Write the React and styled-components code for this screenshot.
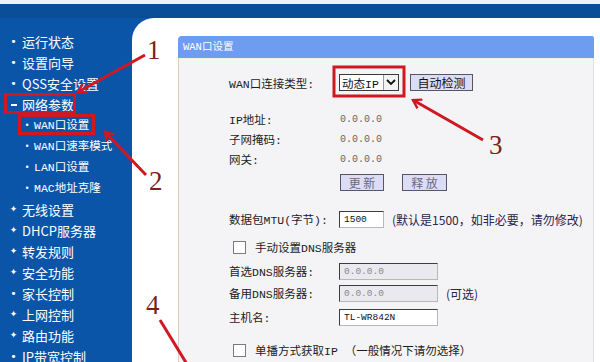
import React from 'react'
import styled, { createGlobalStyle } from 'styled-components'

const CJK = `'Noto Sans CJK SC', 'Noto Sans', sans-serif`
const SONG = `'Liberation Mono', 'Noto Sans CJK SC', monospace`
const RED = '#cf1820'

const GlobalStyle = createGlobalStyle`
  html, body {
    margin: 0;
    padding: 0;
    background: #ffffff;
  }
  body {
    width: 600px;
    height: 362px;
    overflow: hidden;
    font-family: ${CJK};
  }
`

const menu = [
  { text: '运行状态', mark: 'dot' },
  { text: '设置向导', mark: 'dot' },
  { text: 'QSS安全设置', mark: 'dot' },
  { text: '网络参数', mark: 'minus' },
  { text: 'WAN口设置', mark: 'dot', sub: true },
  { text: 'WAN口速率模式', mark: 'dot', sub: true },
  { text: 'LAN口设置', mark: 'dot', sub: true },
  { text: 'MAC地址克隆', mark: 'dot', sub: true },
  { text: '无线设置', mark: 'plus' },
  { text: 'DHCP服务器', mark: 'plus' },
  { text: '转发规则', mark: 'plus' },
  { text: '安全功能', mark: 'plus' },
  { text: '家长控制', mark: 'dot' },
  { text: '上网控制', mark: 'plus' },
  { text: '路由功能', mark: 'plus' },
  { text: 'IP带宽控制', mark: 'dot' },
]

const Marker = ({ kind, sub }) => {
  if (kind === 'minus') return <Mark><Dash /></Mark>
  if (kind === 'plus') return <Mark $star>✦</Mark>
  return <Mark $sub={sub}>•</Mark>
}

export default function App() {
  return (
    <>
      <GlobalStyle />
      <Screen>
        <TopStrip />
        <TopBar />
        <Main>
          <Sidebar>
            {menu.map((m) => (
              <MenuItem key={m.text} $sub={m.sub}>
                <Marker kind={m.mark} sub={m.sub} />
                <span>{m.text}</span>
              </MenuItem>
            ))}
          </Sidebar>
          <Content>
            <Panel>
              <PanelHead>WAN口设置</PanelHead>
              <PanelBody>
                <Row $h={27} $mt={0}>
                  <Label>WAN口连接类型:</Label>
                  <Select>
                    <span>动态IP</span>
                    <SelectArrow>
                      <svg width="10" height="7" viewBox="0 0 10 7">
                        <polyline points="1,1 5,5 9,1" fill="none" stroke="#111" strokeWidth="1.8" />
                      </svg>
                    </SelectArrow>
                  </Select>
                  <Button $w={63} $ml={11}>自动检测</Button>
                </Row>
                <Row $h={20} $mt={13}>
                  <Label>IP地址:</Label>
                  <Value>0.0.0.0</Value>
                </Row>
                <Row $h={20} $mt={0}>
                  <Label>子网掩码:</Label>
                  <Value>0.0.0.0</Value>
                </Row>
                <Row $h={20} $mt={0}>
                  <Label>网关:</Label>
                  <Value>0.0.0.0</Value>
                </Row>
                <Row $h={18} $mt={4}>
                  <Label />
                  <Button $w={44} $muted>更 新</Button>
                  <Button $w={45} $ml={18} $muted>释 放</Button>
                </Row>
                <Row $h={20} $mt={18}>
                  <Label>数据包MTU(字节):</Label>
                  <Input $w={45}>1500</Input>
                  <Hint $ml={8}>(默认是1500，如非必要，请勿修改)</Hint>
                </Row>
                <Row $h={20} $mt={8}>
                  <Check />
                  <CheckText>手动设置DNS服务器</CheckText>
                </Row>
                <Row $h={20} $mt={4}>
                  <Label>首选DNS服务器:</Label>
                  <Input $w={99} $disabled>0.0.0.0</Input>
                </Row>
                <Row $h={20} $mt={2}>
                  <Label>备用DNS服务器:</Label>
                  <Input $w={99} $disabled>0.0.0.0</Input>
                  <Hint $ml={8}>(可选)</Hint>
                </Row>
                <Row $h={20} $mt={4}>
                  <Label>主机名:</Label>
                  <Input $w={99}>TL-WR842N</Input>
                </Row>
                <Row $h={20} $mt={13}>
                  <Check />
                  <CheckText>单播方式获取IP （一般情况下请勿选择）</CheckText>
                </Row>
              </PanelBody>
            </Panel>
          </Content>
        </Main>

        <Overlay>
          <svg width="600" height="362" viewBox="0 0 600 362">
            <defs>
              <marker id="head" markerWidth="12" markerHeight="12" refX="9" refY="6" orient="auto" markerUnits="userSpaceOnUse">
                <path d="M1,1 L9,6 L1,11" fill="none" stroke={RED} strokeWidth="2.4" />
              </marker>
            </defs>
            <rect x="5.5" y="94.5" width="69" height="18" fill="none" stroke={RED} strokeWidth="3" />
            <rect x="19.5" y="115.5" width="74" height="18" fill="none" stroke={RED} strokeWidth="3" />
            <rect x="334" y="67" width="70" height="29" fill="none" stroke={RED} strokeWidth="3" />
            <line x1="145" y1="55" x2="78" y2="92" stroke={RED} strokeWidth="3" markerEnd="url(#head)" />
            <line x1="146" y1="175" x2="105" y2="132" stroke={RED} strokeWidth="3" markerEnd="url(#head)" />
            <line x1="483" y1="140" x2="413" y2="100" stroke={RED} strokeWidth="3" markerEnd="url(#head)" />
            <line x1="160" y1="320" x2="193" y2="374" stroke={RED} strokeWidth="3" />
          </svg>
          <Num $x={147} $y={37}>1</Num>
          <Num $x={149} $y={168}>2</Num>
          <Num $x={489} $y={132}>3</Num>
          <Num $x={146} $y={292}>4</Num>
        </Overlay>
      </Screen>
    </>
  )
}

const Screen = styled.div`
  position: relative;
  width: 600px;
  height: 362px;
  display: flex;
  flex-direction: column;
  overflow: hidden;
  background: #ffffff;
`

const TopStrip = styled.div`
  height: 4px;
  background: #edf2f7;
`

const TopBar = styled.div`
  height: 14px;
  background: #0a4d98;
`

const Main = styled.div`
  flex: 1;
  display: flex;
  min-height: 0;
  background: #0b55a9;
`

const Sidebar = styled.nav`
  width: 132px;
  flex: none;
  padding-top: 13px;
  display: flex;
  flex-direction: column;
`

const MenuItem = styled.div`
  height: 21px;
  flex: none;
  display: flex;
  align-items: center;
  padding-left: ${(p) => (p.$sub ? '20px' : '5px')};
  color: #ffffff;
  white-space: nowrap;
  font-family: ${(p) => (p.$sub ? SONG : CJK)};
  font-size: ${(p) => (p.$sub ? '11.5px' : '13px')};
  line-height: 21px;
`

const Mark = styled.span`
  width: ${(p) => (p.$sub ? '14px' : '17px')};
  flex: none;
  display: flex;
  justify-content: center;
  align-items: center;
  font-family: 'DejaVu Sans', sans-serif;
  font-size: ${(p) => (p.$star ? '9px' : p.$sub ? '8px' : '11px')};
  color: #ffffff;
`

const Dash = styled.span`
  width: 6px;
  height: 2px;
  background: #ffffff;
`

const Content = styled.main`
  flex: 1;
  min-width: 0;
  display: flex;
  background: #ffffff;
  border-top-left-radius: 22px;
  padding: 18px 6px 0 46px;
`

const Panel = styled.section`
  flex: 1;
  display: flex;
  flex-direction: column;
`

const PanelHead = styled.header`
  height: 22px;
  flex: none;
  padding-left: 5px;
  background: #6d9cf1;
  border-top-left-radius: 4px;
  border-top-right-radius: 2px;
  color: #ffffff;
  font-family: ${SONG};
  font-size: 10.5px;
  line-height: 22px;
`

const PanelBody = styled.div`
  flex: 1;
  padding: 10px 0 0 50px;
  background: #f4f4f7;
  border-left: 1px solid #e3cdb8;
  border-right: 1px solid #dde2ea;
  border-top: 1px solid #f3f0dc;
`

const Row = styled.div`
  height: ${(p) => p.$h}px;
  margin-top: ${(p) => p.$mt}px;
  display: flex;
  align-items: center;
  white-space: nowrap;
`

const Label = styled.span`
  width: 111px;
  flex: none;
  font-family: ${SONG};
  font-size: 11.5px;
  color: #1c1c1c;
`

const Value = styled.span`
  font-family: 'Liberation Mono', monospace;
  font-size: 10px;
  color: #666666;
`

const Select = styled.div`
  width: 60px;
  height: 17px;
  margin-left: -1px;
  box-sizing: border-box;
  display: flex;
  align-items: center;
  justify-content: space-between;
  padding-left: 2px;
  border: 1px solid #3a3a3a;
  background: #ffffff;
  font-family: ${SONG};
  font-size: 11.5px;
  color: #111111;
`

const SelectArrow = styled.span`
  width: 14px;
  height: 15px;
  display: flex;
  align-items: center;
  justify-content: center;
  border-left: 1px solid #9a9a9a;
  background: #f2f2f2;
`

const Button = styled.div`
  width: ${(p) => p.$w}px;
  height: 17px;
  margin-left: ${(p) => p.$ml || 0}px;
  box-sizing: border-box;
  display: flex;
  align-items: center;
  justify-content: center;
  border: 1px solid #555566;
  background: #dcdcf6;
  font-family: ${CJK};
  font-size: 12px;
  color: ${(p) => (p.$muted ? '#6a6a80' : '#111111')};
`

const Input = styled.div`
  width: ${(p) => p.$w}px;
  height: 17px;
  box-sizing: border-box;
  display: flex;
  align-items: center;
  padding-left: 4px;
  margin-left: -1px;
  border: 1px solid #3d3d3d;
  border-right-color: #b8b8b8;
  border-bottom-color: #b8b8b8;
  background: ${(p) => (p.$disabled ? '#e9e9ef' : '#ffffff')};
  font-family: 'Liberation Mono', monospace;
  font-size: 9.5px;
  color: ${(p) => (p.$disabled ? '#8a8a8a' : '#111111')};
`

const Hint = styled.span`
  margin-left: ${(p) => p.$ml || 0}px;
  font-family: ${CJK};
  font-size: 12px;
  color: #26264a;
`

const Check = styled.span`
  width: 13px;
  height: 13px;
  margin-left: 4px;
  box-sizing: border-box;
  border: 1px solid #7a7a7a;
  background: #ffffff;
  flex: none;
`

const CheckText = styled.span`
  margin-left: 9px;
  font-family: ${SONG};
  font-size: 11.5px;
  color: #1c1c1c;
`

const Overlay = styled.div`
  position: absolute;
  inset: 0;
  pointer-events: none;
  svg {
    display: block;
  }
`

const Num = styled.span`
  position: absolute;
  left: ${(p) => p.$x}px;
  top: ${(p) => p.$y}px;
  font-family: 'Liberation Serif', serif;
  font-size: 27px;
  line-height: 27px;
  color: #7d1f1f;
`
